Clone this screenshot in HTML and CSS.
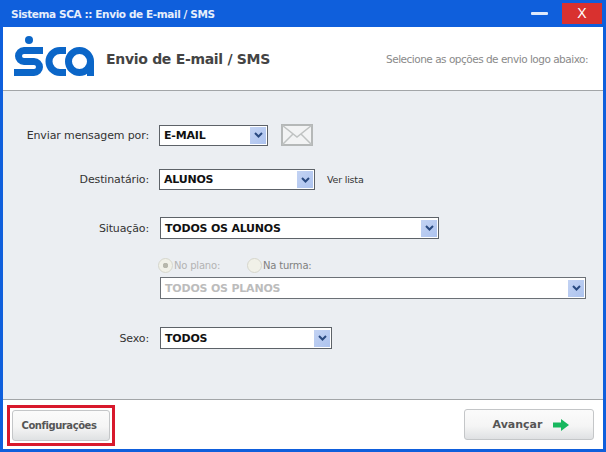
FILE: index.html
```html
<!DOCTYPE html>
<html lang="pt">
<head>
<meta charset="utf-8">
<title>Sistema SCA</title>
<link rel="stylesheet" href="styles.css">
</head>
<body>
<div class="window">
  <div class="titlebar">
    <span class="title">Sistema SCA :: Envio de E-mail / SMS</span>
    <span class="minimize"></span>
    <span class="close">X</span>
  </div>
  <div class="content">
    <header class="header">
      <svg class="logo" width="80" height="40" viewBox="0 0 80 40" aria-label="SCA">
        <circle cx="15" cy="4" r="4" fill="#0b66c8"/>
        <path d="M29 14.500 H10 a5.500 5.500 0 0 0 0 11 H20 a5.500 5.500 0 0 1 0 11 H0" fill="none" stroke="#0b66c8" stroke-width="7"/>
        <path d="M52 14.500 H46 a11 11 0 0 0 0 22 H52" fill="none" stroke="#0b66c8" stroke-width="7"/>
        <circle cx="65.500" cy="25.500" r="11" fill="none" stroke="#0b66c8" stroke-width="7"/>
        <rect x="73" y="25" width="7" height="15" fill="#0b66c8"/>
      </svg>
      <h1 class="heading">Envio de E-mail / SMS</h1>
      <p class="hint">Selecione as opções de envio logo abaixo:</p>
    </header>
    <main class="form">
      <div class="row row-email">
        <label class="label">Enviar mensagem por:</label>
        <div class="select w-email"><span class="value">E-MAIL</span><span class="arrow"><svg width="9" height="6" viewBox="0 0 9 6"><path d="M1 1 L4.500 4.500 L8 1" fill="none" stroke="#2a4a80" stroke-width="2"/></svg></span></div>
        <svg class="mail" width="32" height="22" viewBox="0 0 32 22"><rect x="1" y="1" width="30" height="20" fill="#f2f3f4" stroke="#b5b8b8" stroke-width="2"/><path d="M1.500 1.500 L16 13 L30.500 1.500 M1.500 20.500 L12 10 M30.500 20.500 L20 10" fill="none" stroke="#bfc2c2" stroke-width="1.500"/></svg>
      </div>
      <div class="row row-dest">
        <label class="label">Destinatário:</label>
        <div class="select w-dest"><span class="value">ALUNOS</span><span class="arrow"><svg width="9" height="6" viewBox="0 0 9 6"><path d="M1 1 L4.500 4.500 L8 1" fill="none" stroke="#2a4a80" stroke-width="2"/></svg></span></div>
        <span class="link">Ver lista</span>
      </div>
      <div class="row row-sit">
        <label class="label">Situação:</label>
        <div class="select w-sit"><span class="value">TODOS OS ALUNOS</span><span class="arrow"><svg width="9" height="6" viewBox="0 0 9 6"><path d="M1 1 L4.500 4.500 L8 1" fill="none" stroke="#2a4a80" stroke-width="2"/></svg></span></div>
      </div>
      <div class="radios">
        <span class="radio checked">No plano:</span>
        <span class="radio turma">Na turma:</span>
      </div>
      <div class="row row-plano">
        <div class="select w-plano disabled"><span class="value">TODOS OS PLANOS</span><span class="arrow"><svg width="9" height="6" viewBox="0 0 9 6"><path d="M1 1 L4.500 4.500 L8 1" fill="none" stroke="#2a4a80" stroke-width="2"/></svg></span></div>
      </div>
      <div class="row row-sexo">
        <label class="label">Sexo:</label>
        <div class="select w-sexo"><span class="value">TODOS</span><span class="arrow"><svg width="9" height="6" viewBox="0 0 9 6"><path d="M1 1 L4.500 4.500 L8 1" fill="none" stroke="#2a4a80" stroke-width="2"/></svg></span></div>
      </div>
    </main>
    <footer class="footer">
      <div class="highlight"><button class="btn btn-config">Configurações</button></div>
      <button class="btn btn-next">Avançar<svg width="16" height="12" viewBox="0 0 16 12"><path d="M0 3.500 H8 V0 L16 6 L8 12 V8.500 H0 Z" fill="#17b75e"/></svg></button>
    </footer>
  </div>
</div>
</body>
</html>
```
FILE: styles.css
```css
* { box-sizing: border-box; }
html, body { margin: 0; padding: 0; }
body { width: 606px; height: 452px; overflow: hidden; font-family: "DejaVu Sans", sans-serif; }
.window { width: 606px; height: 452px; background: #0f5fdc; padding: 0 3px 3px; display: flex; flex-direction: column; }
.titlebar { height: 27px; display: flex; align-items: center; flex: none; position: relative; }
.title { font-size: 10.500px; font-weight: 700; color: #e6eefb; margin-left: 8px; flex: 1; letter-spacing: -0.400px; }
.minimize { width: 17px; height: 3px; background: #dfe9fb; margin-right: 14px; border-radius: 1px; }
.close { width: 40px; height: 21px; background: #d9312f; color: #fff; font: 14px "Liberation Sans", sans-serif; display: flex; align-items: center; justify-content: center; margin-right: 1px; margin-bottom: 1px; }
.content { flex: 1; display: flex; flex-direction: column; background: #fff; }
.header { height: 64px; flex: none; display: flex; align-items: center; background: #fff; border-bottom: 1px solid #a2a5a8; padding: 0 4px 0 11px; }
.logo { flex: none; margin-bottom: 5px; }
.heading { margin: 0 0 0 12px; font-size: 14px; font-weight: 700; color: #444; flex: 1; letter-spacing: -0.300px; }
.hint { margin: 0 11px 0 0; font-size: 10.500px; color: #8a8a8a; letter-spacing: -0.500px; }
.form { flex: 1; background: #ebeef2; border-bottom: 1px solid #a2a5a8; }
.row { display: flex; align-items: center; }
.label { width: 146px; text-align: right; font-size: 11px; color: #333; margin-right: 10px; letter-spacing: -0.130px; flex: none; }
.select { height: 21px; border: 1px solid #5d6268; background: #fff; display: flex; align-items: center; justify-content: space-between; padding: 1px; flex: none; }
.value { font-size: 11px; font-weight: 700; color: #111; padding-left: 3px; letter-spacing: -0.200px; }
.arrow { width: 16px; height: 17px; background: linear-gradient(135deg, #c3d3f3, #adc3ef); display: flex; align-items: center; justify-content: center; }
.row-email { margin-top: 33px; }
.w-email { width: 109px; }
.mail { margin-left: 13px; }
.row-dest { margin-top: 23px; }
.w-dest { width: 156px; }
.link { font-size: 9.500px; color: #333; margin-left: 12px; letter-spacing: -0.200px; }
.row-sit { margin-top: 27px; }
.row-sit .select, .row-sexo .select { margin-left: 1px; height: 22px; }
.w-sit { width: 279px; }
.radios { display: flex; margin: 19px 0 0 155px; height: 14px; align-items: center; }
.radio { font-size: 10px; color: #b3b3b3; display: flex; align-items: center; letter-spacing: -0.200px; }
.radio::before { content: ""; width: 13px; height: 13px; border: 1px solid #d6d6cc; border-radius: 50%; background: #f1f1e8; margin-right: 1px; }
.radio.checked::before { background: radial-gradient(circle, #b8b8ac 2.500px, #f1f1e8 3px); }
.radio.turma { margin-left: 27px; color: #7f7f7f; }
.row-plano { margin: 5px 0 0 157px; }
.w-plano { width: 426px; height: 22px; border-color: #6b7076; }
.disabled .value { color: #bcbcbc; }
.row-sexo { margin-top: 28px; }
.w-sexo { width: 172px; }
.footer { height: 49px; flex: none; background: #fff; display: flex; align-items: center; justify-content: space-between; padding: 0 9px 0 4px; }
.highlight { border: 3px solid #d8192c; padding: 2px; margin-top: 1px; }
.btn { font-family: "DejaVu Sans", sans-serif; font-weight: 700; color: #555; background: linear-gradient(#fbfbfb 0%, #f5f5f5 55%, #dfe1e3 100%); border: 1px solid #c4c6c8; border-radius: 3px; display: flex; align-items: center; justify-content: center; padding: 0; }
.btn-config { width: 98px; height: 31px; font-size: 10px; letter-spacing: -0.430px; padding-right: 4px; }
.btn-next { width: 130px; height: 31px; font-size: 11px; gap: 11px; padding-left: 4px; }
```
